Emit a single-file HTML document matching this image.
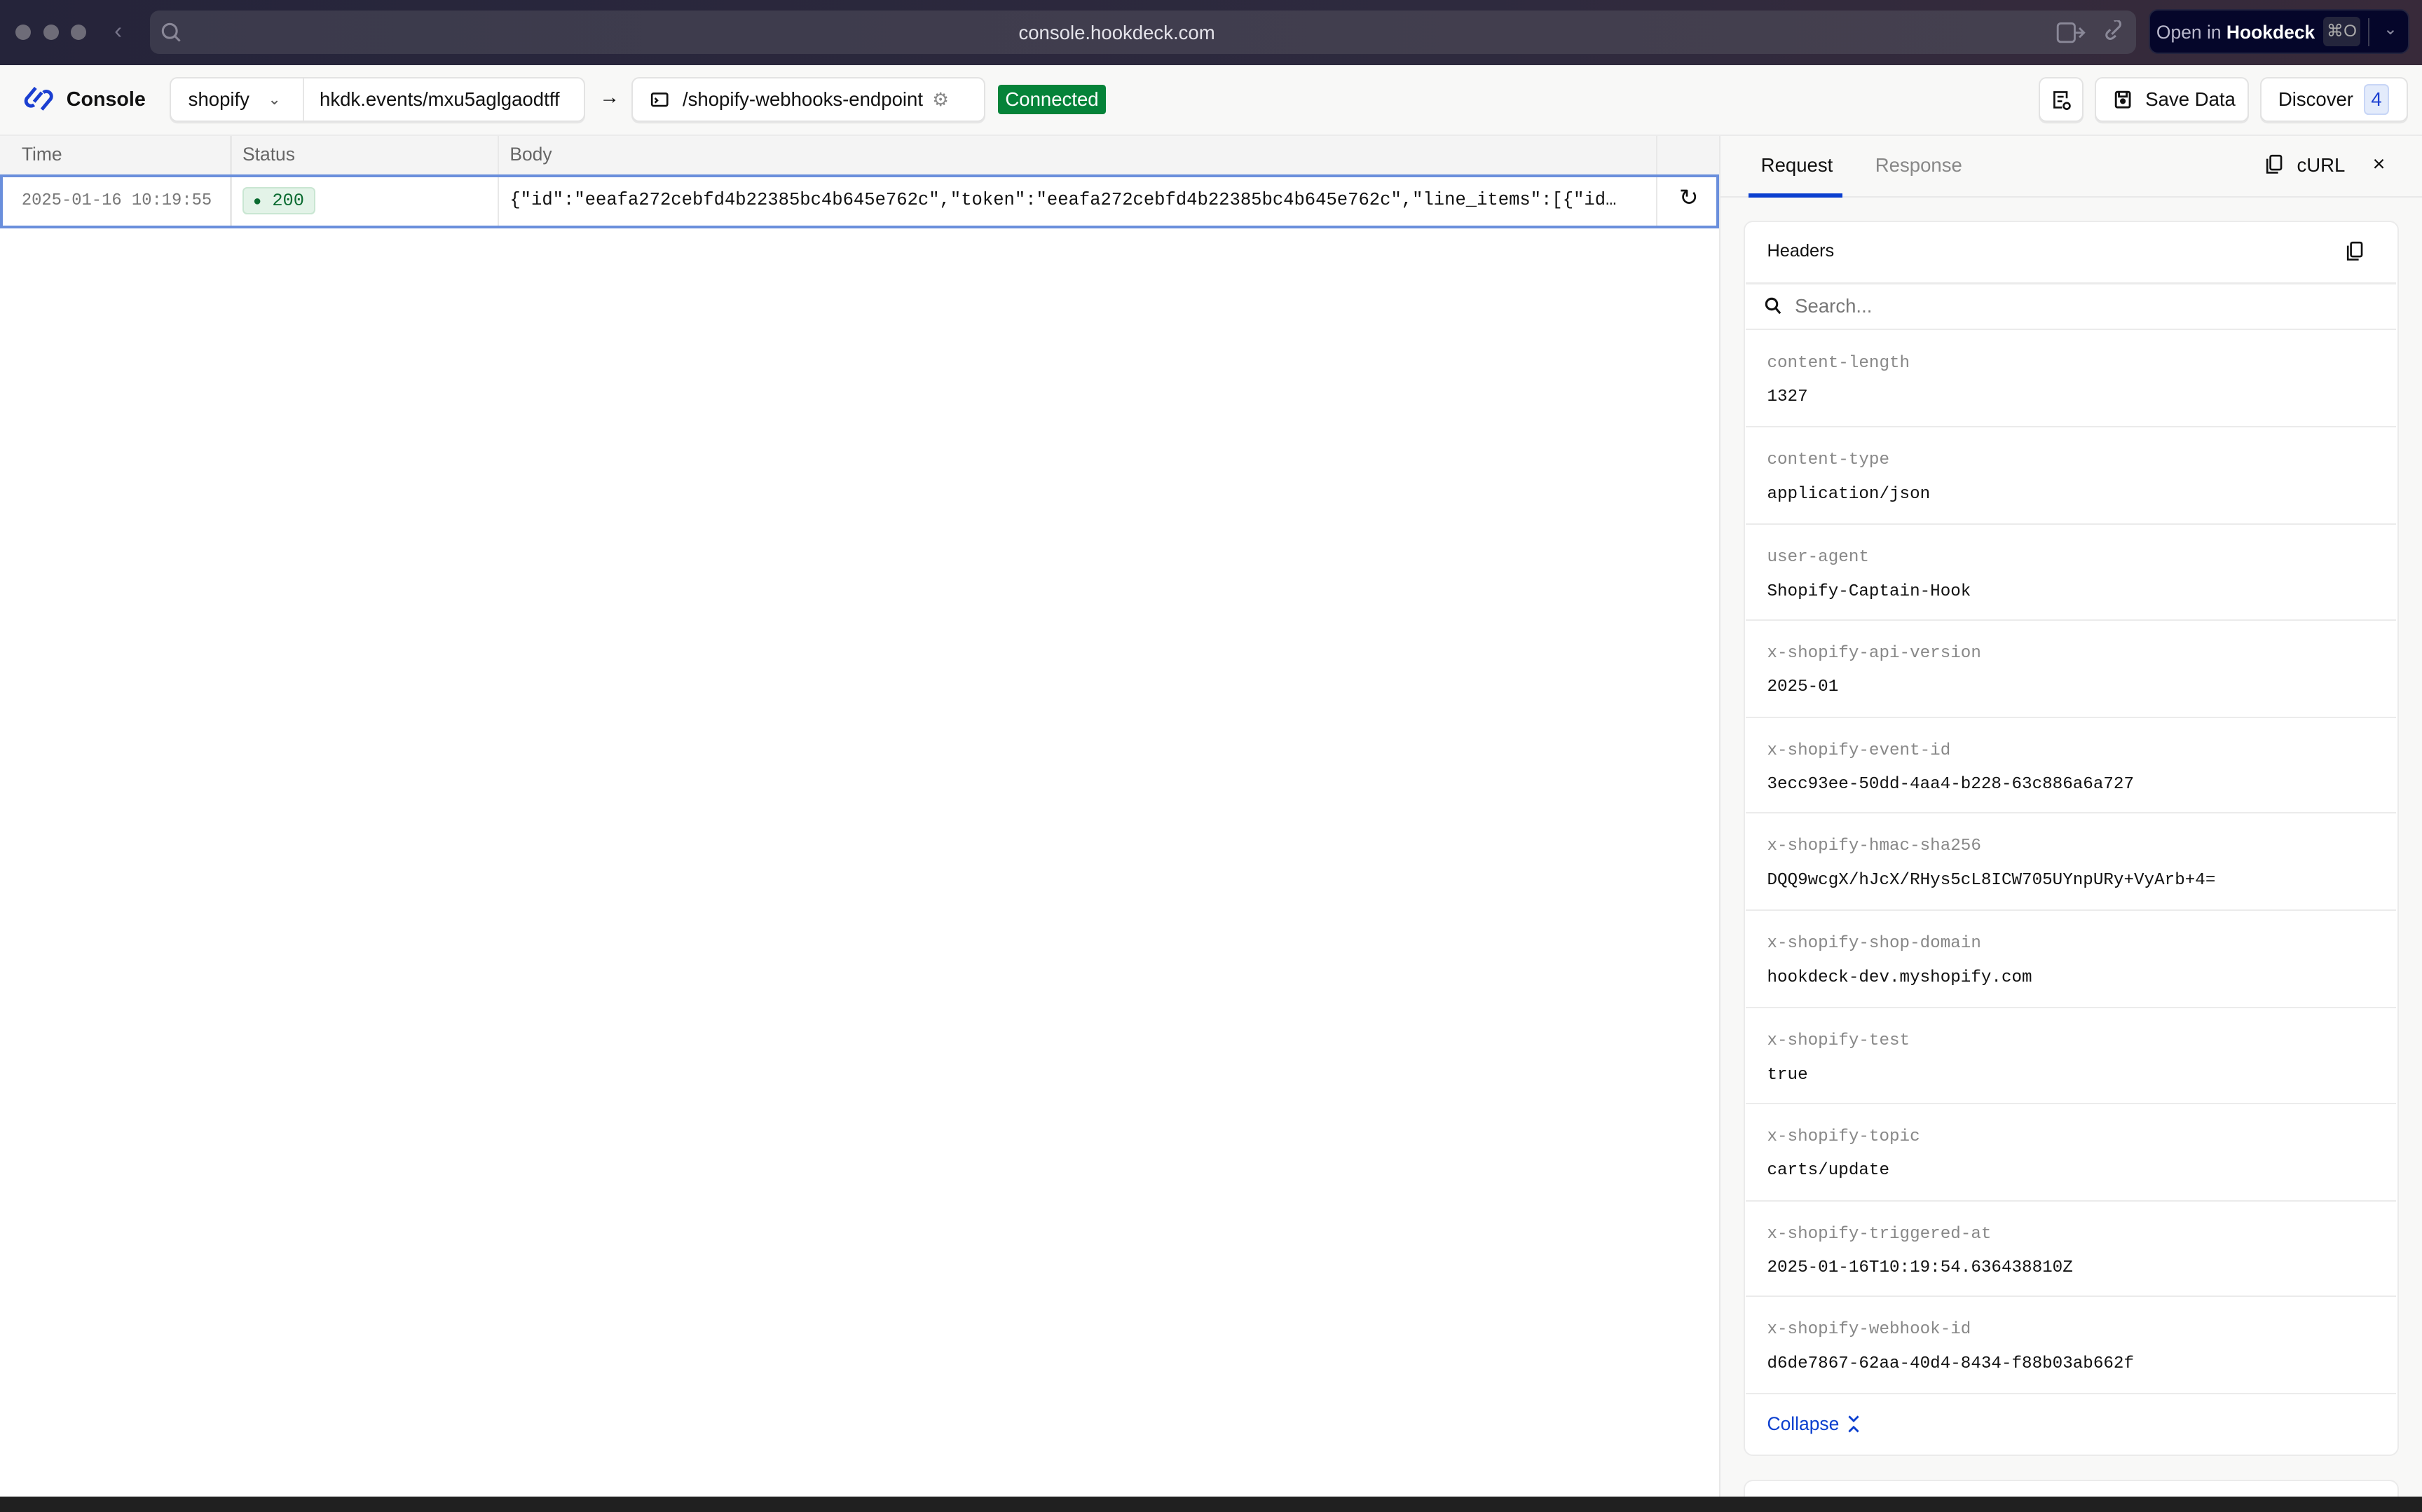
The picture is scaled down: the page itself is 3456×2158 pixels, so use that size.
<!DOCTYPE html>
<html><head><meta charset="utf-8"><style>
*{box-sizing:border-box;margin:0;padding:0}
html,body{width:3456px;height:2158px;overflow:hidden;background:#fff}
#r{zoom:2.2041;width:1568px;height:979px;position:relative;font-family:"Liberation Sans",sans-serif;font-size:13px;color:#111}
.a{position:absolute}
.mono{font-family:"Liberation Mono","DejaVu Sans Mono",monospace}
.btn{position:absolute;top:50px;height:29px;background:#fff;border:1px solid #e3e3e3;border-radius:5px;box-shadow:0 1px 0 #e6e6e6;display:flex;align-items:center;font-size:12.5px}
.hd{position:absolute;left:1130px;width:421px;border-top:1px solid #ebebeb;height:63px}
.hd .k{position:absolute;left:14px;top:15px;font-size:11px;color:#888}
.hd .v{position:absolute;left:14px;top:37px;font-size:11px;color:#111}
</style></head><body><div id="r">
<div class="a" style="left:0;top:0;width:1568px;height:42px;background:linear-gradient(90deg,#25243a,#2e2a3e 60%,#382a3a)"></div>
<div class="a" style="left:10px;top:16px;width:10px;height:10px;border-radius:5px;background:#6e6c78"></div>
<div class="a" style="left:28px;top:16px;width:10px;height:10px;border-radius:5px;background:#6e6c78"></div>
<div class="a" style="left:46px;top:16px;width:10px;height:10px;border-radius:5px;background:#6e6c78"></div>
<div class="a" style="left:74px;top:12px;color:#77748a;font-size:15px">‹</div>
<div class="a" style="left:97px;top:7px;width:1286px;height:28px;border-radius:6px;background:linear-gradient(90deg,#3b3a4c,#45404f)"></div>
<svg class="a" style="left:104px;top:14px" width="14" height="14" viewBox="0 0 14 14" fill="none" stroke="#8a8898" stroke-width="1.4"><circle cx="6" cy="6" r="4.5"/><path d="M9.5 9.5l3 3"/></svg>
<div class="a" style="left:0;width:1446px;top:14px;text-align:center;color:#e4e3ea;font-size:12.5px">console.hookdeck.com</div>
<svg class="a" style="left:1331px;top:13px" width="20" height="16" viewBox="0 0 20 16" fill="none" stroke="#8a8898" stroke-width="1.3"><rect x="1" y="2" width="11" height="12" rx="2"/><path d="M12 8h6M15 5l3 3-3 3"/></svg>
<svg class="a" style="left:1360px;top:13px" width="16" height="16" viewBox="0 0 16 16" fill="none" stroke="#8a8898" stroke-width="1.4"><path d="M7 9l3-3M6 6L4 8a2.5 2.5 0 003.5 3.5L9.5 10M10 6l2-2a2.5 2.5 0 00-3.5-3.5"/></svg>
<div class="a" style="left:1391px;top:6px;width:169px;height:29px;border-radius:6px;background:#05062a;border:1px solid #23243f"></div>
<div class="a" style="left:1396px;top:14px;color:#b9b8cc;font-size:12px">Open in <b style="color:#fff">Hookdeck</b></div>
<div class="a" style="left:1504px;top:11px;width:24px;height:19px;border-radius:3px;background:#24253c;color:#aaa;font-size:11px;text-align:center;line-height:19px">⌘O</div>
<div class="a" style="left:1533px;top:12px;width:1px;height:18px;background:#3b3c52"></div>
<div class="a" style="left:1543px;top:12px;color:#8a8aa0;font-size:11px">⌄</div>
<div class="a" style="left:0;top:42px;width:1568px;height:46px;background:#f8f8f7;border-bottom:1px solid #ebebeb"></div>
<svg class="a" style="left:14px;top:55px" width="22" height="18" viewBox="0 0 22 18" fill="none" stroke="#1b3fd1" stroke-width="2.2"><path d="M9 2L4 8a3 3 0 004 5M13 5l-5 6M13 16l5-6a3 3 0 00-4-5"/></svg>
<div class="a" style="left:43px;top:57px;font-size:13px;font-weight:bold">Console</div>
<div class="btn" style="left:110px;width:269px"><span style="padding-left:11px">shopify</span><span style="margin-left:12px;font-size:10px;color:#555">⌄</span><div style="position:absolute;left:85px;top:0;bottom:0;width:1px;background:#e6e6e6"></div><span style="position:absolute;left:96px">hkdk.events/mxu5aglgaodtff</span></div>
<div class="a" style="left:388px;top:56px;font-size:13px">→</div>
<div class="btn" style="left:409px;width:229px"><svg style="margin-left:11px" width="12" height="12" viewBox="0 0 12 12" fill="none" stroke="#111" stroke-width="1.2"><rect x="1" y="2" width="10" height="8" rx="1"/><path d="M3 5l1.5 1.5L3 8"/></svg><span style="margin-left:9px">/shopify-webhooks-endpoint</span><span style="margin-left:6px;color:#888;font-size:12px">⚙</span></div>
<div class="a" style="left:646px;top:55px;width:70px;height:19px;background:#058339;border-radius:2px;color:#fff;font-size:12.5px;text-align:center;line-height:19px">Connected</div>
<div class="btn" style="left:1320px;width:29px;justify-content:center"><svg width="13" height="14" viewBox="0 0 13 14" fill="none" stroke="#111" stroke-width="1.2"><path d="M10 6V2H2v10h5M4 5h4M4 8h3"/><circle cx="10" cy="11" r="2"/></svg></div>
<div class="btn" style="left:1356px;width:100px"><svg style="margin-left:12px" width="11" height="12" viewBox="0 0 11 12" fill="none" stroke="#111" stroke-width="1.3"><rect x="1" y="1" width="9" height="10" rx="1"/><circle cx="5.5" cy="7" r="1.2" fill="#111"/><path d="M3 1v3h5V1"/></svg><span style="margin-left:9px">Save Data</span></div>
<div class="btn" style="left:1463px;width:96px"><span style="margin-left:11px">Discover</span><span style="margin-left:7px;width:16px;height:20px;border-radius:3px;background:#e3ebfb;border:1px solid #c8d6f6;color:#1b3fd1;text-align:center;line-height:18px">4</span></div>
<div class="a" style="left:0;top:88px;width:1113px;height:25px;background:#f4f4f4"></div>
<div class="a" style="left:14px;top:93px;color:#666;font-size:12px">Time</div>
<div class="a" style="left:157px;top:93px;color:#666;font-size:12px">Status</div>
<div class="a" style="left:330px;top:93px;color:#666;font-size:12px">Body</div>
<div class="a" style="left:149px;top:88px;width:1px;height:60px;background:#e8e8e8"></div>
<div class="a" style="left:322px;top:88px;width:1px;height:60px;background:#e8e8e8"></div>
<div class="a" style="left:1072px;top:88px;width:1px;height:60px;background:#e8e8e8"></div>
<div class="a" style="left:1113px;top:88px;width:1px;height:891px;background:#e8e8e8"></div>
<div class="a" style="left:0;top:113px;width:1113px;height:35px;border:2px solid #6a8fdc"></div>
<div class="a mono" style="left:14px;top:124px;font-size:10.8px;color:#777">2025-01-16 10:19:55</div>
<div class="a mono" style="left:157px;top:121px;width:47px;height:18px;background:#e3f3e8;border:1px solid #c9e6d2;border-radius:3px;color:#0a6b30;font-size:11.5px;line-height:16px;padding-left:6px"><span style="font-size:9px">●</span> 200</div>
<div class="a mono" style="left:330px;top:123px;font-size:11.6px;color:#111;white-space:nowrap;width:732px;overflow:hidden">{"id":"eeafa272cebfd4b22385bc4b645e762c","token":"eeafa272cebfd4b22385bc4b645e762c","line_items":[{"id…</div>
<div class="a" style="left:1087px;top:119px;font-size:15px">↻</div>
<div class="a" style="left:1114px;top:88px;width:454px;height:881px;background:#f8f8f7"></div>
<div class="a" style="left:1114px;top:127px;width:454px;height:1px;background:#e9e9e9"></div>
<div class="a" style="left:1140px;top:100px;font-size:12.5px">Request</div>
<div class="a" style="left:1214px;top:100px;font-size:12.5px;color:#888">Response</div>
<div class="a" style="left:1132px;top:125px;width:61px;height:3px;background:#0b3fcf"></div>
<svg class="a" style="left:1467px;top:100px" width="11" height="13" viewBox="0 0 11 13" fill="none" stroke="#111" stroke-width="1.2"><rect x="3" y="1" width="7" height="9" rx="1"/><path d="M1 3v9h7"/></svg>
<div class="a" style="left:1487px;top:100px;font-size:12.5px">cURL</div>
<div class="a" style="left:1536px;top:98px;font-size:14px">×</div>
<div class="a" style="left:1129px;top:143px;width:424px;height:800px;background:#fff;border:1px solid #ebebeb;border-radius:6px"></div>
<div class="a" style="left:1144px;top:156px;font-size:11.5px">Headers</div>
<svg class="a" style="left:1519px;top:156px" width="11" height="13" viewBox="0 0 11 13" fill="none" stroke="#111" stroke-width="1.2"><rect x="3" y="1" width="7" height="9" rx="1"/><path d="M1 3v9h7"/></svg>
<div class="a" style="left:1130px;top:183px;width:421px;height:1px;background:#ebebeb"></div>
<svg class="a" style="left:1142px;top:192px" width="12" height="12" viewBox="0 0 12 12" fill="none" stroke="#111" stroke-width="1.4"><circle cx="5" cy="5" r="3.5"/><path d="M7.5 7.5l3 3.5"/></svg>
<div class="a" style="left:1162px;top:191px;font-size:12.5px;color:#777">Search...</div>
<div class="mono">
<div class="hd" style="top:213px"><div class="k">content-length</div><div class="v">1327</div></div>
<div class="hd" style="top:276px"><div class="k">content-type</div><div class="v">application/json</div></div>
<div class="hd" style="top:339px"><div class="k">user-agent</div><div class="v">Shopify-Captain-Hook</div></div>
<div class="hd" style="top:401px"><div class="k">x-shopify-api-version</div><div class="v">2025-01</div></div>
<div class="hd" style="top:464px"><div class="k">x-shopify-event-id</div><div class="v">3ecc93ee-50dd-4aa4-b228-63c886a6a727</div></div>
<div class="hd" style="top:526px"><div class="k">x-shopify-hmac-sha256</div><div class="v">DQQ9wcgX/hJcX/RHys5cL8ICW705UYnpURy+VyArb+4=</div></div>
<div class="hd" style="top:589px"><div class="k">x-shopify-shop-domain</div><div class="v">hookdeck-dev.myshopify.com</div></div>
<div class="hd" style="top:652px"><div class="k">x-shopify-test</div><div class="v">true</div></div>
<div class="hd" style="top:714px"><div class="k">x-shopify-topic</div><div class="v">carts/update</div></div>
<div class="hd" style="top:777px"><div class="k">x-shopify-triggered-at</div><div class="v">2025-01-16T10:19:54.636438810Z</div></div>
<div class="hd" style="top:839px"><div class="k">x-shopify-webhook-id</div><div class="v">d6de7867-62aa-40d4-8434-f88b03ab662f</div></div>
</div>
<div class="a" style="left:1130px;top:902px;width:421px;height:1px;background:#ebebeb"></div>
<div class="a" style="left:1144px;top:915px;font-size:12px;color:#0b3fcf">Collapse</div>
<svg class="a" style="left:1195px;top:915px" width="10" height="14" viewBox="0 0 10 14" fill="none" stroke="#0b3fcf" stroke-width="1.3"><path d="M2 2l3 3 3-3M2 12l3-3 3 3"/></svg>
<div class="a" style="left:1129px;top:958px;width:424px;height:20px;background:#fff;border:1px solid #ebebeb;border-radius:6px"></div>
<div class="a" style="left:0;top:969px;width:1568px;height:10px;background:#202020"></div>
</div></body></html>
